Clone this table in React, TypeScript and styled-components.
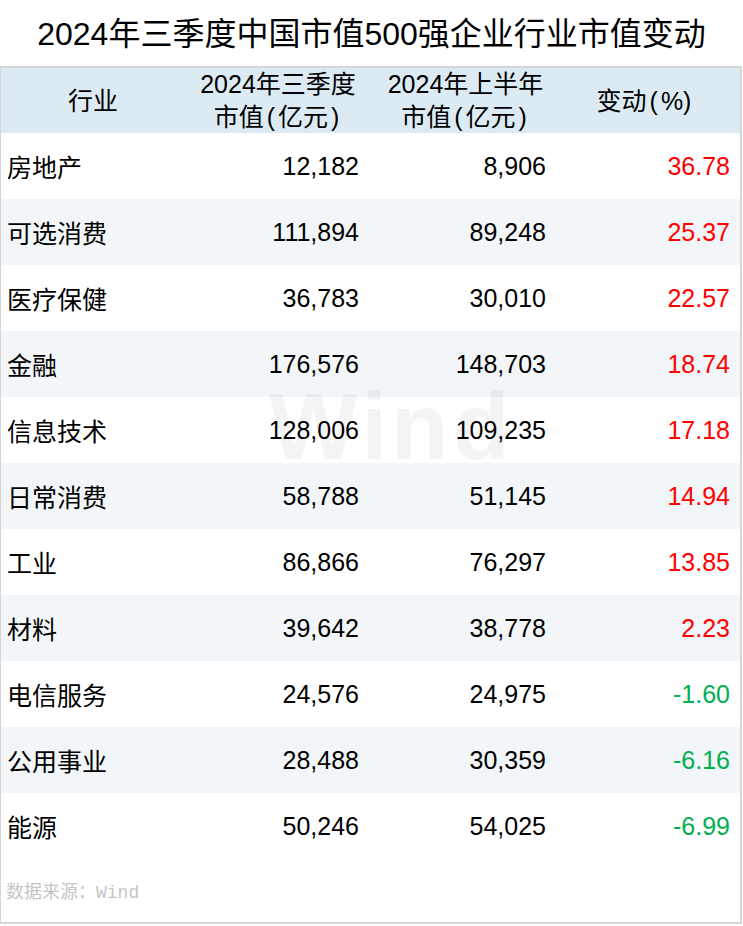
import React from 'react';
import styled, { createGlobalStyle } from 'styled-components';

type Row = { name: string; q3: string; h1: string; change: string };

const rows: Row[] = [
  { name: '房地产', q3: '12,182', h1: '8,906', change: '36.78' },
  { name: '可选消费', q3: '111,894', h1: '89,248', change: '25.37' },
  { name: '医疗保健', q3: '36,783', h1: '30,010', change: '22.57' },
  { name: '金融', q3: '176,576', h1: '148,703', change: '18.74' },
  { name: '信息技术', q3: '128,006', h1: '109,235', change: '17.18' },
  { name: '日常消费', q3: '58,788', h1: '51,145', change: '14.94' },
  { name: '工业', q3: '86,866', h1: '76,297', change: '13.85' },
  { name: '材料', q3: '39,642', h1: '38,778', change: '2.23' },
  { name: '电信服务', q3: '24,576', h1: '24,975', change: '-1.60' },
  { name: '公用事业', q3: '28,488', h1: '30,359', change: '-6.16' },
  { name: '能源', q3: '50,246', h1: '54,025', change: '-6.99' },
];

const GlobalStyle = createGlobalStyle`
  body {
    margin: 0;
    background: #fff;
    font-family: "Liberation Sans", "Noto Sans CJK SC", sans-serif;
  }
`;

const Page = styled.div`
  width: 743px;
  height: 926px;
  background: #fff;
`;

const Title = styled.h1`
  margin: 0;
  height: 66px;
  display: flex;
  align-items: center;
  justify-content: center;
  font-size: 32px;
  font-weight: normal;
  color: #000;
  font-family: "Liberation Sans", "Noto Sans CJK SC", sans-serif;
  padding-bottom: 4px;
  box-sizing: border-box;
`;

const Panel = styled.div`
  position: relative;
  width: 742px;
  height: 858px;
  box-sizing: border-box;
  border: 1px solid #d6d6d6;
  border-top-width: 2px;
  border-right-width: 2px;
  border-bottom-width: 2px;
`;

const Grid = styled.div`
  display: grid;
  grid-template-columns: 184px 188px 185px 1fr;
`;

const HeadRow = styled(Grid)`
  height: 65px;
  background: #dcebf3;
`;

const HeadCell = styled.div<{ $shift?: number }>`
  display: flex;
  flex-direction: column;
  align-items: center;
  justify-content: center;
  font-size: 25px;
  line-height: 33px;
  color: #000;
  padding-right: ${(p) => p.$shift ?? 0}px;
`;

const Paren = styled.span`
  margin: 0 3px;
`;

const BodyRow = styled(Grid)<{ $alt: boolean }>`
  height: 66px;
  align-items: center;
  background: ${(p) => (p.$alt ? '#f2f6f8' : '#fff')};
  font-size: 25px;
  color: #000;
`;

const NameCell = styled.div`
  padding-left: 6px;
`;

const NumCell = styled.div<{ $pad: number; $tone?: 'up' | 'down' }>`
  text-align: right;
  padding-right: ${(p) => p.$pad}px;
  color: ${(p) => (p.$tone === 'up' ? '#ff0000' : p.$tone === 'down' ? '#00b050' : '#000')};
`;

const Source = styled.div`
  height: 62px;
  display: flex;
  align-items: center;
  padding-left: 5px;
  font-size: 18px;
  color: #c6c6c6;
  font-family: "Liberation Mono", "Noto Sans CJK SC", monospace;
`;

const Watermark = styled.div`
  position: absolute;
  left: 268px;
  top: 312px;
  font-size: 94px;
  font-weight: bold;
  letter-spacing: 4px;
  color: rgba(0, 0, 0, 0.045);
  font-family: "Liberation Sans", sans-serif;
  pointer-events: none;
  line-height: 1;
`;

export default function App() {
  return (
    <Page>
      <GlobalStyle />
      <Title>2024年三季度中国市值500强企业行业市值变动</Title>
      <Panel>
        <HeadRow>
          <HeadCell>行业</HeadCell>
          <HeadCell $shift={2}>
            <span>2024年三季度</span>
            <span>
              市值<Paren>(</Paren>亿元<Paren>)</Paren>
            </span>
          </HeadCell>
          <HeadCell>
            <span>2024年上半年</span>
            <span>
              市值<Paren>(</Paren>亿元<Paren>)</Paren>
            </span>
          </HeadCell>
          <HeadCell $shift={10}>
            <span>
              变动<Paren>(</Paren>%)
            </span>
          </HeadCell>
        </HeadRow>
        {rows.map((r, i) => (
          <BodyRow key={r.name} $alt={i % 2 === 1}>
            <NameCell>{r.name}</NameCell>
            <NumCell $pad={14}>{r.q3}</NumCell>
            <NumCell $pad={12}>{r.h1}</NumCell>
            <NumCell $pad={10} $tone={r.change.startsWith('-') ? 'down' : 'up'}>
              {r.change}
            </NumCell>
          </BodyRow>
        ))}
        <Source>数据来源：Wind</Source>
        <Watermark>Wind</Watermark>
      </Panel>
    </Page>
  );
}
